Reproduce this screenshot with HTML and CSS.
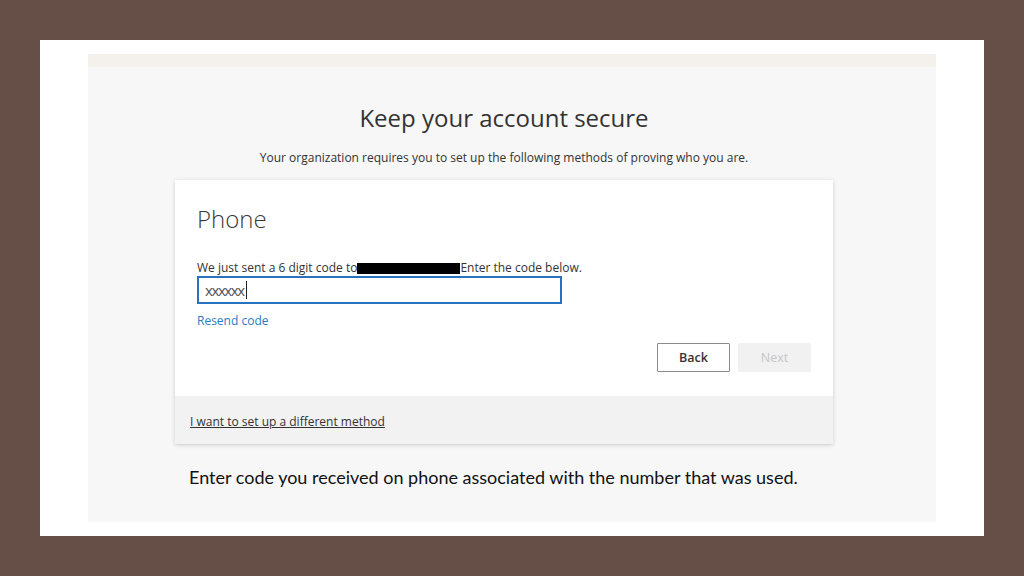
FILE: index.html
```html
<!DOCTYPE html>
<html lang="en">
<head>
<meta charset="utf-8">
<title>Keep your account secure</title>
<link rel="stylesheet" href="styles.css">
</head>
<body>
<div class="slide">
  <div class="screen">
    <div class="topstrip"></div>
    <div class="column">
      <h1 class="title">Keep your account secure</h1>
      <p class="subtitle">Your organization requires you to set up the following methods of proving who you are.</p>
      <div class="card">
        <div class="card-body">
          <h2 class="method">Phone</h2>
          <p class="sent">We just sent a 6 digit code to<span class="redact"></span>Enter the code below.</p>
          <div class="input"><span class="code">xxxxxx</span><span class="caret"></span></div>
          <a class="resend">Resend code</a>
          <div class="actions">
            <button class="btn btn-back">Back</button>
            <button class="btn btn-next">Next</button>
          </div>
        </div>
        <div class="card-foot">
          <a class="alt">I want to set up a different method</a>
        </div>
      </div>
      <p class="caption">Enter code you received on phone associated with the number that was used.</p>
    </div>
  </div>
</div>
</body>
</html>
```

FILE: styles.css
```css
* { box-sizing: border-box; }
html, body { margin: 0; padding: 0; }
body {
  width: 1024px;
  height: 576px;
  background: #654f46;
  padding: 40px;
  font-family: "Open Sans", "Noto Sans", sans-serif;
  color: #333;
}
.slide {
  width: 944px;
  height: 496px;
  background: #fff;
  padding: 14px 48px;
}
.screen {
  width: 848px;
  height: 468px;
  background: #f7f7f7;
}
.topstrip {
  height: 13px;
  background: #f4f1ed;
}
.column {
  width: 658px;
  margin-left: 87px;
  display: flex;
  flex-direction: column;
}
.title {
  margin: 0;
  padding-top: 34px;
  text-align: center;
  font-size: 24px;
  font-weight: 400;
  line-height: 34px;
  color: #333;
}
.subtitle {
  margin: 0;
  margin-top: 15px;
  text-align: center;
  font-size: 12px;
  line-height: 16px;
  color: #333;
}
.card {
  margin-top: 14px;
  background: #fff;
  box-shadow: 0 1px 4px rgba(0,0,0,0.18);
}
.card-body {
  padding: 22px 22px 22px 22px;
  display: flex;
  flex-direction: column;
  height: 216px;
}
.method {
  margin: 0;
  font-size: 24px;
  font-weight: 300;
  line-height: 34px;
  color: #3a3a3a;
}
.sent {
  margin: 0;
  margin-top: 24px;
  font-size: 12px;
  line-height: 16px;
  display: flex;
  align-items: center;
}
.redact {
  display: inline-block;
  width: 103px;
  height: 11px;
  background: #000;
  margin-top: 1px;
}
.input {
  width: 365px;
  height: 28px;
  border: 2px solid #2a72c0;
  margin-top: 0;
  padding: 0 6px;
  display: flex;
  align-items: center;
  font-size: 15px;
  color: #555;
  letter-spacing: -1.4px;
}
.caret {
  display: inline-block;
  width: 1px;
  height: 18px;
  background: #222;
  margin-left: 2px;
}
.resend {
  margin-top: 9px;
  font-size: 12px;
  line-height: 16px;
  color: #2b7bc2;
}
.actions {
  display: flex;
  justify-content: flex-end;
  gap: 8px;
  margin-top: 14px;
}
.btn {
  width: 73px;
  height: 29px;
  font-family: "Open Sans", sans-serif;
  font-size: 12.5px;
  font-weight: 600;
  border-radius: 1px;
  padding: 0;
}
.btn-back {
  background: #fff;
  border: 1px solid #8a8a8a;
  color: #333;
}
.btn-next {
  background: #f1f1f1;
  border: 1px solid #f1f1f1;
  color: #c6c6c6;
  font-weight: 400;
}
.card-foot {
  background: #f2f2f2;
  height: 48px;
  padding: 13px 15px 0;
}
.alt {
  font-size: 12px;
  line-height: 16px;
  color: #333;
  text-decoration: underline;
}
.caption {
  margin: 0;
  margin-top: 22px;
  padding-left: 14px;
  font-family: "Lato", "Open Sans", sans-serif;
  font-size: 18px;
  line-height: 22px;
  color: #111;
}
```
